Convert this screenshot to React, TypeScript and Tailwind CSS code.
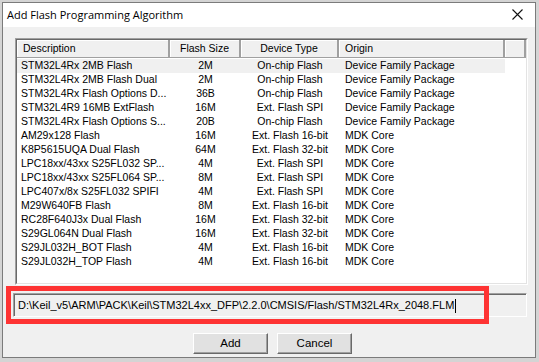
import React from 'react';

type Row = { desc: string; size: string; type: string; origin: string };

const rows: Row[] = [
  { desc: 'STM32L4Rx 2MB Flash', size: '2M', type: 'On-chip Flash', origin: 'Device Family Package' },
  { desc: 'STM32L4Rx 2MB Flash Dual', size: '2M', type: 'On-chip Flash', origin: 'Device Family Package' },
  { desc: 'STM32L4Rx Flash Options D...', size: '36B', type: 'On-chip Flash', origin: 'Device Family Package' },
  { desc: 'STM32L4R9 16MB ExtFlash', size: '16M', type: 'Ext. Flash SPI', origin: 'Device Family Package' },
  { desc: 'STM32L4Rx Flash Options S...', size: '20B', type: 'On-chip Flash', origin: 'Device Family Package' },
  { desc: 'AM29x128 Flash', size: '16M', type: 'Ext. Flash 16-bit', origin: 'MDK Core' },
  { desc: 'K8P5615UQA Dual Flash', size: '64M', type: 'Ext. Flash 32-bit', origin: 'MDK Core' },
  { desc: 'LPC18xx/43xx S25FL032 SP...', size: '4M', type: 'Ext. Flash SPI', origin: 'MDK Core' },
  { desc: 'LPC18xx/43xx S25FL064 SP...', size: '8M', type: 'Ext. Flash SPI', origin: 'MDK Core' },
  { desc: 'LPC407x/8x S25FL032 SPIFI', size: '4M', type: 'Ext. Flash SPI', origin: 'MDK Core' },
  { desc: 'M29W640FB Flash', size: '8M', type: 'Ext. Flash 16-bit', origin: 'MDK Core' },
  { desc: 'RC28F640J3x Dual Flash', size: '16M', type: 'Ext. Flash 32-bit', origin: 'MDK Core' },
  { desc: 'S29GL064N Dual Flash', size: '16M', type: 'Ext. Flash 32-bit', origin: 'MDK Core' },
  { desc: 'S29JL032H_BOT Flash', size: '4M', type: 'Ext. Flash 16-bit', origin: 'MDK Core' },
  { desc: 'S29JL032H_TOP Flash', size: '4M', type: 'Ext. Flash 16-bit', origin: 'MDK Core' },
];

const HeaderCell = ({ w, children, center }: { w: string; children?: React.ReactNode; center?: boolean }) => (
  <div
    className={`${w} h-full flex items-center border-r-2 border-r-[#a0a0a0] border-b border-b-[#a0a0a0] shadow-[inset_1px_1px_0_#ffffff] ${
      center ? 'justify-center' : 'pl-[6px]'
    }`}
  >
    {children}
  </div>
);

const Button = ({ children }: { children: React.ReactNode }) => (
  <button className="w-[75px] h-[21px] bg-[#e1e1e1] border border-t-white border-l-white border-r-[#696969] border-b-[#696969] shadow-[inset_-1px_-1px_0_#a0a0a0] text-[11.5px] text-black flex items-center justify-center">
    {children}
  </button>
);

export default function App() {
  return (
    <div
      className="w-[539px] h-[362px] bg-[#d4d4d4] overflow-hidden pl-[2px] pt-[2px]"
      style={{ fontFamily: '"Liberation Sans", Arial, sans-serif' }}
    >
      <div className="relative w-[534px] h-[356px] border border-[#7b7b7b] bg-[#f0f0f0] flex flex-col">
        {/* TITLE BAR */}
        <div className="h-[24px] bg-white flex items-center justify-between pl-[4px] pr-[12px] shrink-0">
          <span className="text-[11px] text-black" style={{ fontFamily: '"Open Sans", "Noto Sans", sans-serif' }}>
            Add Flash Programming Algorithm
          </span>
          <svg width="11" height="11" viewBox="0 0 11 11" className="mb-[1px]">
            <path d="M0.5 0.5 L10.5 10.5 M10.5 0.5 L0.5 10.5" stroke="#111" strokeWidth="1.1" />
          </svg>
        </div>

        {/* LIST */}
        <div className="ml-[12px] mt-[11px] w-[513px] h-[247px] border-t border-l border-t-[#a0a0a0] border-l-[#a0a0a0] border-b border-r border-b-white border-r-white">
          <div className="w-full h-full bg-white border-t border-l border-t-[#696969] border-l-[#696969] border-b border-r border-b-[#e3e3e3] border-r-[#e3e3e3] text-[10.5px] text-black">
            <div className="flex h-[18px] bg-[#f0f0f0]">
              <HeaderCell w="w-[153px]">Description</HeaderCell>
              <HeaderCell w="w-[71px]" center>Flash Size</HeaderCell>
              <HeaderCell w="w-[98px]" center>Device Type</HeaderCell>
              <HeaderCell w="w-[166px]">Origin</HeaderCell>
              <HeaderCell w="flex-1" />
            </div>
            <div className="pt-[1px]">
              {rows.map((r, i) => (
                <div key={i} className={`flex h-[14px] items-center w-[488px] ${i === 0 ? 'bg-[#f0f0f0]' : ''}`}>
                  <div className="w-[153px] pl-[4px] whitespace-nowrap overflow-hidden">{r.desc}</div>
                  <div className="w-[71px] text-center">{r.size}</div>
                  <div className="w-[98px] text-center whitespace-nowrap">{r.type}</div>
                  <div className="w-[166px] pl-[6px] whitespace-nowrap">{r.origin}</div>
                </div>
              ))}
            </div>
          </div>
        </div>

        {/* PATH FIELD */}
        <div className="ml-[10px] mt-[8px] w-[514px] h-[24px] bg-[#f0f0f0] border-t border-l border-t-[#a0a0a0] border-l-[#a0a0a0] border-b border-r border-b-white border-r-white">
          <div className="h-full border-t border-l border-t-[#696969] border-l-[#696969] flex items-center pl-[3px] text-[11px] text-black whitespace-nowrap">
            D:\Keil_v5\ARM\PACK\Keil\STM32L4xx_DFP\2.2.0\CMSIS/Flash/STM32L4Rx_2048.FLM
            <span className="inline-block w-[1px] h-[14px] bg-black ml-[1px]" />
          </div>
        </div>

        {/* BUTTONS */}
        <div className="flex gap-[9px] mt-[16px] ml-[190px]">
          <Button>Add</Button>
          <Button>Cancel</Button>
        </div>

        {/* annotation */}
        <div className="absolute left-[3px] top-[283px] w-[483px] h-[38px] border-[5px] border-[#fe3333] pointer-events-none" />
      </div>
    </div>
  );
}
